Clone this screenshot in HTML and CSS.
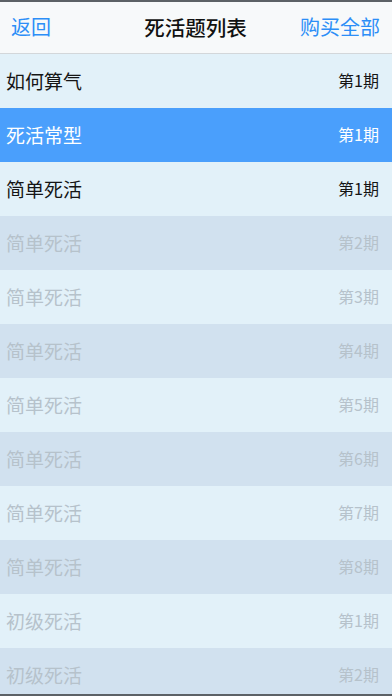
FILE: index.html
```html
<!DOCTYPE html>
<html lang="zh">
<head>
<meta charset="utf-8">
<title>死活题列表</title>
<link rel="stylesheet" href="styles.css">
</head>
<body>
<div class="screen">
  <header class="nav">
    <span class="nav-btn nav-left">返回</span>
    <span class="nav-title">死活题列表</span>
    <span class="nav-btn nav-right">购买全部</span>
  </header>
  <ul class="list">
    <li class="row light"><span class="name">如何算气</span><span class="issue">第1期</span></li>
    <li class="row selected"><span class="name">死活常型</span><span class="issue">第1期</span></li>
    <li class="row light"><span class="name">简单死活</span><span class="issue">第1期</span></li>
    <li class="row dark locked"><span class="name">简单死活</span><span class="issue">第2期</span></li>
    <li class="row light locked"><span class="name">简单死活</span><span class="issue">第3期</span></li>
    <li class="row dark locked"><span class="name">简单死活</span><span class="issue">第4期</span></li>
    <li class="row light locked"><span class="name">简单死活</span><span class="issue">第5期</span></li>
    <li class="row dark locked"><span class="name">简单死活</span><span class="issue">第6期</span></li>
    <li class="row light locked"><span class="name">简单死活</span><span class="issue">第7期</span></li>
    <li class="row dark locked"><span class="name">简单死活</span><span class="issue">第8期</span></li>
    <li class="row light locked"><span class="name">初级死活</span><span class="issue">第1期</span></li>
    <li class="row dark locked"><span class="name">初级死活</span><span class="issue">第2期</span></li>
  </ul>
</div>
</body>
</html>
```

FILE: styles.css
```css
html, body {
  margin: 0;
  padding: 0;
}
body {
  font-family: "Noto Sans CJK SC", "Noto Sans", "Liberation Sans", sans-serif;
  background: #e2f1f9;
}
.screen {
  width: 392px;
  height: 696px;
  box-sizing: border-box;
  border-top: 2px solid #5c6166;
  border-bottom: 2px solid #5c6166;
  overflow: hidden;
  display: flex;
  flex-direction: column;
}
.nav {
  flex: 0 0 auto;
  height: 51px;
  border-bottom: 1px solid #d3d7da;
  background: #f7f9fa;
  display: grid;
  grid-template-columns: 1fr auto 1fr;
  align-items: center;
  padding: 0 12px 0 11px;
}
.nav-btn {
  color: #2c8ef7;
  font-size: 20px;
  line-height: 1;
  margin-top: -1px;
}
.nav-left { justify-self: start; }
.nav-right { justify-self: end; }
.nav-title {
  color: #111;
  font-size: 20.5px;
  font-weight: 500;
  line-height: 1;
  margin-top: -1px;
}
.list {
  list-style: none;
  margin: 0;
  padding: 0;
  flex: 0 0 auto;
}
.row {
  height: 54px;
  display: flex;
  align-items: center;
  justify-content: space-between;
  padding: 0 13px 2px 6px;
  box-sizing: border-box;
  color: #151515;
}
.row.light { background: #e2f1f9; }
.row.dark { background: #d1e1ef; }
.row.selected { background: #4a9ffc; color: #fff; }
.row.locked { color: #b6c2cb; }
.name {
  font-size: 19px;
  line-height: 1;
}
.issue {
  font-size: 16px;
  line-height: 1;
}
```
